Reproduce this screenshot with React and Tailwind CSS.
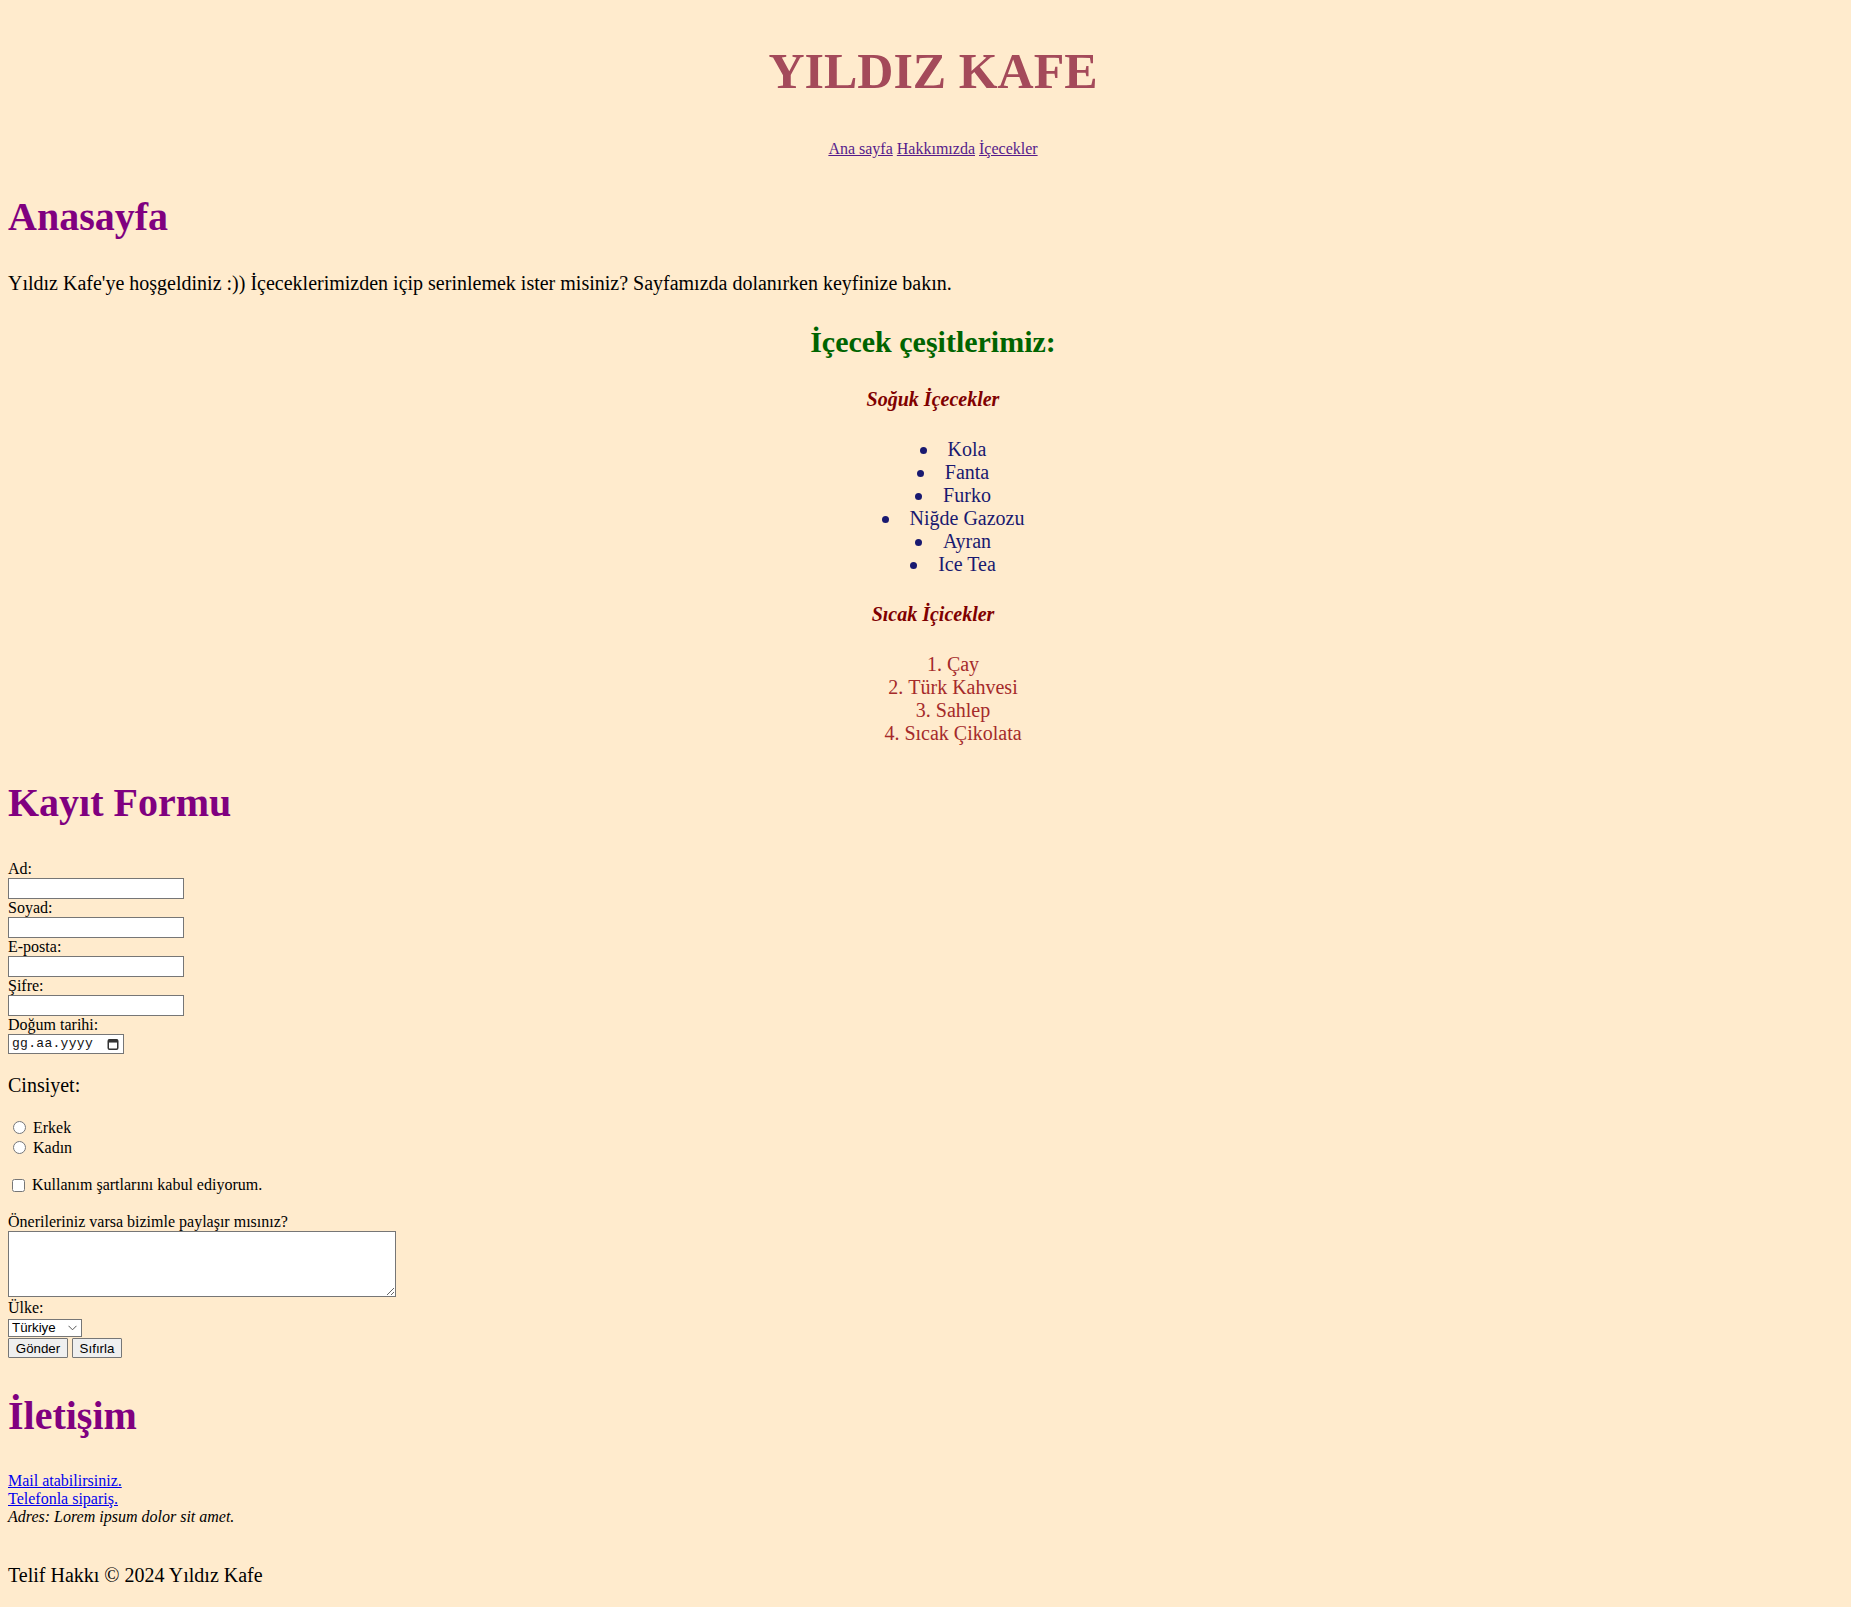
const soguk = ["Kola", "Fanta", "Furko", "Niğde Gazozu", "Ayran", "Ice Tea"];
const sicak = ["Çay", "Türk Kahvesi", "Sahlep", "Sıcak Çikolata"];

function TextInput({ label, type = "text" }) {
    return (
        <>
            <label className="block leading-[18px]">{label}</label>
            <input
                type={type}
                className="block h-[21px] w-[176px] border border-[#767676] bg-white px-[2px] font-['Liberation_Sans',Arial,sans-serif] text-[13.33px] outline-none"
            />
        </>
    );
}

export default function App() {
    return (
        <div className="min-h-screen bg-[#ffebcd] px-2 pt-[42px] pb-6 font-['Liberation_Serif','Times_New_Roman',serif] text-[16px] leading-[normal] text-black">
            <header className="pl-[15px] text-center">
                <h1 className="text-[50px] font-bold text-[#a44a5a]">YILDIZ KAFE</h1>
                <nav className="mt-[40px] text-[16px]">
                    <a href="#" className="text-[#551a8b] underline">Ana sayfa</a>{" "}
                    <a href="#" className="text-[#551a8b] underline">Hakkımızda</a>{" "}
                    <a href="#" className="text-[#551a8b] underline">İçecekler</a>
                </nav>
            </header>

            <section>
                <h2 className="mt-[34.7px] text-[40px] font-bold text-[#800080]">Anasayfa</h2>
                <p className="mt-[32.4px] text-[20px]">
                    Yıldız Kafe'ye hoşgeldiniz :)) İçeceklerimizden içip serinlemek ister misiniz? Sayfamızda dolanırken keyfinize bakın.
                </p>
                <div className="pl-[15px] text-center">
                    <h3 className="mt-[30px] text-[30px] font-bold text-[#006400]">İçecek çeşitlerimiz:</h3>
                    <h4 className="mt-[29.2px] text-[20px] font-bold italic text-[#800000]">Soğuk İçecekler</h4>
                    <ul className="mt-[27px] pl-[40px] text-[20px] text-[#191970]">
                        {soguk.map((s) => (
                            <li key={s}>
                                <span className="mr-[21px] inline-block size-[7px] rounded-full bg-[#191970] align-[2.5px]" />
                                {s}
                            </li>
                        ))}
                    </ul>
                    <h4 className="mt-[27.1px] text-[20px] font-bold italic text-[#800000]">Sıcak İçicekler</h4>
                    <ol className="mt-[27px] list-inside list-decimal pl-[40px] text-[20px] text-[#a52a2a]">
                        {sicak.map((s) => (
                            <li key={s}>{s}</li>
                        ))}
                    </ol>
                </div>
            </section>

            <section>
                <h2 className="mt-[33.6px] text-[40px] font-bold text-[#800080]">Kayıt Formu</h2>
                <form className="mt-[33.7px] text-[16px]" onSubmit={(e) => e.preventDefault()}>
                    <TextInput label="Ad:" />
                    <TextInput label="Soyad:" />
                    <TextInput label="E-posta:" type="email" />
                    <TextInput label="Şifre:" type="password" />
                    <label className="block leading-[18px]">Doğum tarihi:</label>
                    <div className="flex h-[20.5px] w-[116px] items-center justify-between border border-[#767676] bg-white pl-[3px] pr-[4px]">
                        <span className="font-['Liberation_Mono','Courier_New',monospace] text-[13px] tracking-[0.3px] text-[#111]">gg.aa.yyyy</span>
                        <svg width="12" height="12" viewBox="0 0 12 12">
                            <rect x="1.25" y="1.75" width="9.5" height="9.5" rx="1.2" fill="none" stroke="#333" strokeWidth="1.5" />
                            <rect x="1.25" y="1.75" width="9.5" height="2.8" fill="#333" />
                        </svg>
                    </div>

                    <p className="mt-[20px] text-[20px]">Cinsiyet:</p>
                    <div className="mt-[20.7px] flex h-[20px] items-center">
                        <input type="radio" name="cinsiyet" className="ml-[5px] mr-[7px] size-[13px]" />
                        <span>Erkek</span>
                    </div>
                    <div className="flex h-[20px] items-center">
                        <input type="radio" name="cinsiyet" className="ml-[5px] mr-[7px] size-[13px]" />
                        <span>Kadın</span>
                    </div>

                    <div className="mt-[17.4px] flex h-[20px] items-center">
                        <input type="checkbox" className="ml-[4px] mr-[7px] size-[13px]" />
                        <span>Kullanım şartlarını kabul ediyorum.</span>
                    </div>

                    <label className="mt-[17.6px] block leading-[18px]">Önerileriniz varsa bizimle paylaşır mısınız?</label>
                    <textarea className="block h-[66px] w-[388px] border border-[#767676] bg-white p-[2px] font-['Liberation_Mono',monospace] text-[13.33px] outline-none" />

                    <label className="mt-[2.2px] block leading-[18px]">Ülke:</label>
                    <div className="relative mt-[2px] w-[74px]">
                        <select className="block h-[18px] w-[74px] appearance-none border border-[#767676] bg-white pl-[3px] font-['Liberation_Sans',Arial,sans-serif] text-[13.33px] leading-[16px] outline-none">
                            <option>Türkiye</option>
                            <option>Almanya</option>
                            <option>Fransa</option>
                        </select>
                        <svg className="pointer-events-none absolute right-[5px] top-[6px]" width="9" height="6" viewBox="0 0 9 6">
                            <path d="M0.5 0.8 L4.5 4.8 L8.5 0.8" fill="none" stroke="#555" strokeWidth="1" />
                        </svg>
                    </div>
                    <div className="mt-[1px] flex gap-[4px] font-['Liberation_Sans',Arial,sans-serif] text-[13.33px]">
                        <button type="submit" className="h-[20px] w-[60px] rounded-[1px] border border-[#767676] bg-[#efefef] text-center">Gönder</button>
                        <button type="reset" className="h-[20px] w-[50px] rounded-[1px] border border-[#767676] bg-[#efefef] text-center">Sıfırla</button>
                    </div>
                </form>
            </section>

            <section>
                <h2 className="mt-[34.1px] text-[40px] font-bold text-[#800080]">İletişim</h2>
                <div className="mt-[33.3px]">
                    <a href="#" className="block w-fit text-[#0000ee] underline">Mail atabilirsiniz.</a>
                    <a href="#" className="block w-fit text-[#0000ee] underline">Telefonla sipariş.</a>
                    <address className="italic">Adres: Lorem ipsum dolor sit amet.</address>
                </div>
            </section>

            <footer className="mt-[37.3px] text-[20px]">Telif Hakkı © 2024 Yıldız Kafe</footer>
        </div>
    );
}
